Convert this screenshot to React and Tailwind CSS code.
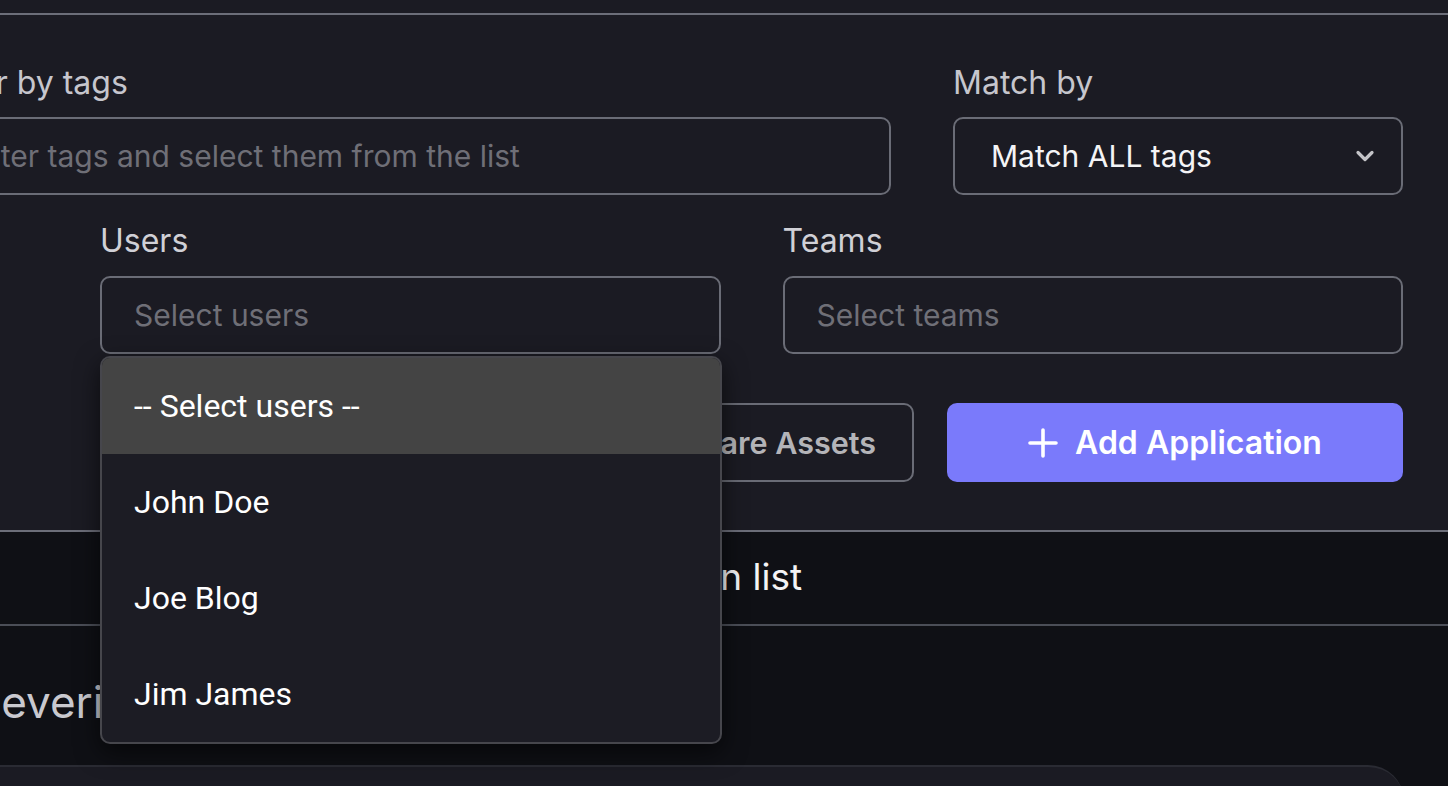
import React from "react";

function Chevron() {
  return (
    <svg width="20" height="14" viewBox="0 0 20 14" fill="none">
      <path d="M3 3.5 L10 10.5 L17 3.5" stroke="#c4c4c8" strokeWidth="3.2" strokeLinecap="round" strokeLinejoin="round" />
    </svg>
  );
}

function Plus() {
  return (
    <svg width="30" height="30" viewBox="0 0 30 30" fill="none">
      <path d="M15 2 V28 M2 15 H28" stroke="white" strokeWidth="3.6" strokeLinecap="round" />
    </svg>
  );
}

export default function App() {
  const users = ["John Doe", "Joe Blog", "Jim James"];
  return (
    <div className="relative h-[786px] w-[1448px] overflow-hidden bg-[#1b1b23] font-['Inter',sans-serif]">
      <div className="h-[13px]" />
      <div className="h-[2px] bg-[#6c6e79]" />

      {/* Filter section */}
      <div className="pr-[45px]">
        {/* Row 1 */}
        <div className="ml-[-68px] mt-[48px] flex gap-[62px]">
          <div className="flex w-[959px] flex-col">
            <label className="h-[40px] text-[32px] leading-[40px] text-[#c6c6cd]">Filter by tags</label>
            <div className="mt-[14px] flex h-[78px] items-center rounded-[10px] border-2 border-[#6a6c76] pl-[31px]">
              <span className="text-[30px] text-[#6f6f77]">Enter tags and select them from the list</span>
            </div>
          </div>
          <div className="flex w-[450px] flex-col">
            <label className="h-[40px] text-[32px] leading-[40px] text-[#c6c6cd]">Match by</label>
            <div className="mt-[14px] flex h-[78px] items-center justify-between rounded-[10px] border-2 border-[#6a6c76] pl-[36px] pr-[26px]">
              <span className="text-[30px] text-[#f4f4f6]">Match ALL tags</span>
              <Chevron />
            </div>
          </div>
        </div>

        {/* Row 2 */}
        <div className="ml-[100px] mt-[26px] flex gap-[62px]">
          <div className="relative flex w-[621px] flex-col">
            <label className="h-[40px] text-[32px] leading-[40px] text-[#d0d0d6]">Users</label>
            <div className="mt-[15px] flex h-[78px] items-center rounded-[10px] border-2 border-[#6a6c76] pl-[32px]">
              <span className="text-[30px] text-[#6f6f77]">Select users</span>
            </div>
          </div>
          <div className="flex w-[621px] flex-col">
            <label className="h-[40px] text-[32px] leading-[40px] text-[#d0d0d6]">Teams</label>
            <div className="mt-[15px] flex h-[78px] items-center rounded-[10px] border-2 border-[#6a6c76] pl-[32px]">
              <span className="text-[30px] text-[#6f6f77]">Select teams</span>
            </div>
          </div>
        </div>

        {/* Row 3 buttons */}
        <div className="mt-[49px] flex justify-end gap-[33px]">
          <div className="flex h-[79px] w-[456px] items-center justify-end rounded-[10px] border-2 border-[#6a6c76] pr-[36px]">
            <span className="text-[30.5px] font-semibold text-[#b4b4b8]">Share Assets</span>
          </div>
          <div className="flex h-[79px] w-[456px] items-center justify-center gap-[17px] rounded-[10px] bg-[#7a7afb]">
            <Plus />
            <span className="text-[32px] font-semibold text-white">Add Application</span>
          </div>
        </div>
      </div>

      <div className="mt-[48px] h-[2px] bg-[#6c6e79]" />
      <div className="flex h-[92px] items-center bg-[#0f1015] pb-[3px] pl-[546px]">
        <span className="text-[37px] text-[#f4f4f6]">Application list</span>
      </div>
      <div className="h-[2px] bg-[#4b4e57]" />
      <div className="h-[200px] bg-[#0f1015]">
        <div className="ml-[-27px] pt-[47px] text-[44px] leading-[58px] text-[#c9c9cf]">Severity</div>
        <div className="ml-[-40px] mt-[34px] h-[100px] w-[1444px] rounded-tr-[36px] border-t-2 border-[#2a2b33] bg-[#1b1b23]" />
      </div>

      {/* Dropdown overlay */}
      <div className="absolute left-[100px] top-[356px] w-[622px] overflow-hidden rounded-[10px] border-2 border-[#46464c] bg-[#1c1c24] font-['Roboto',sans-serif] shadow-[0_8px_24px_rgba(0,0,0,0.6)]">
        <div className="flex h-[96px] items-center bg-[#444444] pl-[32px] text-[32px] text-white">-- Select users --</div>
        {users.map((u) => (
          <div key={u} className="flex h-[96px] items-center pl-[32px] text-[32px] text-white">
            {u}
          </div>
        ))}
      </div>
    </div>
  );
}
